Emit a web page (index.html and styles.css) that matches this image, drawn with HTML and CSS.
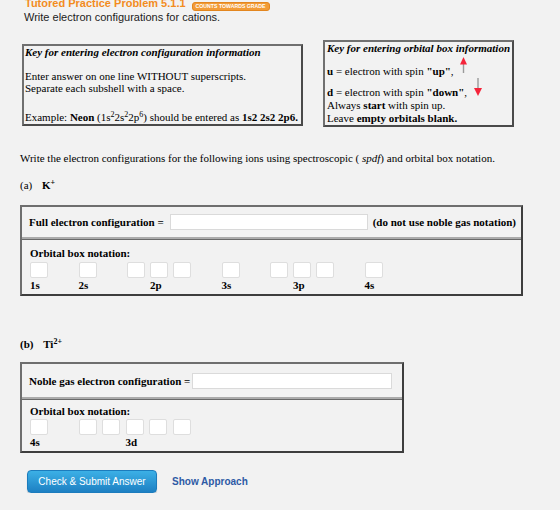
FILE: index.html
```html
<!DOCTYPE html>
<html lang="en">
  <head>
    <meta charset="UTF-8" />
    <meta name="viewport" content="width=device-width, initial-scale=1.0" />
    <title>Tutored Practice Problem 5.1.1</title>
    <link rel="stylesheet" href="styles.css">
  </head>
  <body>
    <div class="page">
      <div class="header">
        <span class="title">Tutored Practice Problem 5.1.1</span>
        <span class="badge">COUNTS TOWARDS GRADE</span>
      </div>
      <p class="subtitle">Write electron configurations for cations.</p>

      <!-- Help boxes -->
      <div class="keys">
        <div class="key key-config">
          <p class="key-title">Key for entering electron configuration information</p>
          <p class="key-body">
            Enter answer on one line WITHOUT superscripts.<br />
            Separate each subshell with a space.
          </p>
          <p class="key-example">
            Example: <b>Neon</b> (1s<sup>2</sup>2s<sup>2</sup>2p<sup>6</sup>) should be entered as <b>1s2 2s2 2p6.</b>
          </p>
        </div>

        <div class="key key-orbital">
          <p class="key-title">Key for entering orbital box information</p>
          <p class="spin-up">
            <b>u</b> = electron with spin <b>"up"</b>,
            <svg class="arrow arrow-up" width="7" height="16" viewBox="0 0 7 16">
              <rect x="2.8" y="6" width="1.4" height="10" fill="#9a9a9a" />
              <path d="M3.5 0 L7 7.5 L0 7.5 Z" fill="#f5243a" />
            </svg>
          </p>
          <p class="spin-down">
            <b>d</b> = electron with spin <b>"down"</b>,
            <svg class="arrow arrow-down" width="8" height="18" viewBox="0 0 8 18">
              <rect x="3.3" y="0" width="1.4" height="11" fill="#9a9a9a" />
              <path d="M0 10 L8 10 L4 18 Z" fill="#f5243a" />
            </svg>
          </p>
          <p>Always <b>start</b> with spin up.</p>
          <p>Leave <b>empty orbitals blank.</b></p>
        </div>
      </div>

      <p class="intro">
        Write the electron configurations for the following ions using spectroscopic ( <i>spdf</i>) and orbital box notation.
      </p>

      <!-- (a) K+ -->
      <p class="ion">(a) <b class="ion-name">K<sup>+</sup></b></p>
      <div class="answer answer-wide">
        <div class="answer-row row-config">
          <b>Full electron configuration =</b>
          <input class="field" type="text" />
          <b class="hint">(do not use noble gas notation)</b>
        </div>
        <div class="answer-row row-orbitals">
          <b>Orbital box notation:</b>
          <div class="orbitals">
            <div class="subshell s"><input type="text" /><b class="label">1s</b></div>
            <div class="subshell s"><input type="text" /><b class="label">2s</b></div>
            <div class="subshell p">
              <input type="text" /><input type="text" /><input type="text" />
              <b class="label">2p</b>
            </div>
            <div class="subshell s"><input type="text" /><b class="label">3s</b></div>
            <div class="subshell p">
              <input type="text" /><input type="text" /><input type="text" />
              <b class="label">3p</b>
            </div>
            <div class="subshell s"><input type="text" /><b class="label">4s</b></div>
          </div>
        </div>
      </div>

      <!-- (b) Ti2+ -->
      <p class="ion ion-b"><b>(b) <span class="ion-name">Ti<sup>2+</sup></span></b></p>
      <div class="answer answer-narrow">
        <div class="answer-row row-config">
          <b>Noble gas electron configuration =</b>
          <input class="field" type="text" />
        </div>
        <div class="answer-row row-orbitals">
          <b>Orbital box notation:</b>
          <div class="orbitals">
            <div class="subshell s"><input type="text" /><b class="label">4s</b></div>
            <div class="subshell d">
              <input type="text" /><input type="text" /><input type="text" /><input type="text" /><input type="text" />
              <b class="label">3d</b>
            </div>
          </div>
        </div>
      </div>

      <div class="actions">
        <button class="submit-btn">Check &amp; Submit Answer</button>
        <a class="approach-link" href="#">Show Approach</a>
      </div>
    </div>
  </body>
</html>
```

FILE: styles.css
```css
* {
  margin: 0;
  padding: 0;
  box-sizing: border-box;
}

body {
  background-color: #f2f2f2;
  font-family: "Liberation Serif", "Times New Roman", serif;
  font-size: 11px;
  color: #000;
  overflow: hidden;
}

.page {
  padding-left: 20px;
}

sup {
  font-size: 8px;
  line-height: 0;
  vertical-align: 4px;
}

/* Header */

.header {
  display: flex;
  align-items: flex-start;
  height: 14px;
  margin-top: -4px;
  padding-left: 5px;
  font-family: "Liberation Sans", Arial, sans-serif;
}

.title {
  color: #f28c1e;
  font-size: 11px;
  font-weight: bold;
  line-height: 14px;
  white-space: nowrap;
}

.badge {
  margin: 6px 0 0 6px;
  padding: 0 3px;
  height: 9px;
  font-size: 5.2px;
  font-weight: bold;
  line-height: 7px;
  color: white;
  white-space: nowrap;
  background-color: #f29b36;
  border: 1px solid #e3861f;
  border-radius: 3px;
}

.subtitle {
  padding-left: 4px;
  font-family: "Liberation Sans", Arial, sans-serif;
  font-size: 11px;
  line-height: 14px;
  color: #1c1c1c;
}

/* Help boxes */

.keys {
  display: flex;
  align-items: flex-start;
  margin-top: 16px;
}

.key {
  border: 2px solid #5e5e5e;
  border-color: #707070 #4a4a4a #4a4a4a #707070;
  white-space: nowrap;
}

.key-title {
  font-weight: bold;
  font-style: italic;
  line-height: 13px;
}

.key-config {
  width: 281px;
  margin: 4px 0 0 2px;
  padding: 0 1px 1px;
}

.key-body {
  margin-top: 11px;
  line-height: 12px;
}

.key-example {
  margin-top: 17px;
  line-height: 12px;
}

.key-orbital {
  width: 191px;
  margin-left: 20px;
  padding: 0 2px;
  line-height: 13px;
}

.spin-up {
  margin-top: 2px;
}

.arrow {
  display: inline-block;
}

.arrow-up {
  margin-left: 4px;
  vertical-align: 2px;
}

.arrow-down {
  margin-left: 4px;
  vertical-align: 0;
}

/* Questions */

.intro {
  margin-top: 25px;
  line-height: 13px;
}

.ion {
  margin-top: 14px;
  line-height: 13px;
}

.ion-name {
  margin-left: 7px;
}

.ion-b {
  margin-top: 42px;
}

.answer {
  margin-top: 13px;
  border: 2px solid #5a5a5a;
  border-color: #6e6e6e #3e3e3e #3e3e3e #6e6e6e;
}

.answer-wide {
  width: 503px;
}

.answer-narrow {
  width: 384px;
  margin-top: 11px;
}

.row-config {
  display: flex;
  align-items: center;
  height: 30px;
  padding: 0 7px;
  white-space: nowrap;
}

.row-config > * {
  flex-shrink: 0;
}

.answer-narrow .row-config {
  height: 33px;
}

.field {
  height: 16px;
  background-color: white;
  border: 1px solid #dadada;
  outline: none;
}

.answer-wide .field {
  width: 198px;
  margin-left: 6px;
}

.answer-narrow .field {
  width: 200px;
  margin-left: 2px;
}

.hint {
  margin-left: 5px;
}

.row-orbitals {
  padding: 8px 8px 3px;
  border-top: 2px solid #ababab;
  box-shadow: inset 0 1px 0 #6a6a6a;
  line-height: 12px;
}

.answer-narrow .row-orbitals {
  padding-top: 6px;
}

.orbitals {
  display: flex;
  column-gap: 30.5px;
  margin-top: 3px;
}

.answer-narrow .orbitals {
  margin-top: 2px;
}

.subshell {
  display: grid;
  grid-template-rows: 16px auto;
  column-gap: 5px;
  row-gap: 1px;
}

.subshell.s {
  grid-template-columns: 18px;
}

.subshell.p {
  grid-template-columns: repeat(3, 18px);
}

.subshell.d {
  grid-template-columns: repeat(5, 18px);
  column-gap: 5.5px;
}

.subshell input {
  width: 18px;
  height: 16px;
  background-color: white;
  border: 1px solid #dedede;
  border-radius: 2px;
  outline: none;
}

.label {
  grid-row: 2;
  grid-column: 1;
  white-space: nowrap;
}

.subshell.p .label {
  grid-column: 2;
}

.subshell.d .label {
  grid-column: 3;
}

/* Buttons */

.actions {
  display: flex;
  align-items: center;
  margin-top: 17px;
  padding-left: 7px;
  font-family: "Liberation Sans", Arial, sans-serif;
}

.submit-btn {
  width: 130px;
  height: 23px;
  font-family: inherit;
  font-size: 10px;
  color: white;
  background: linear-gradient(#3cb0e6, #1d80c3);
  border: 1px solid #1c7cbd;
  border-radius: 4px;
  box-shadow: 0 1px 1px rgba(0, 0, 0, 0.2);
}

.approach-link {
  margin-left: 15px;
  font-size: 10px;
  font-weight: bold;
  color: #2d5aa5;
  text-decoration: none;
}
```
